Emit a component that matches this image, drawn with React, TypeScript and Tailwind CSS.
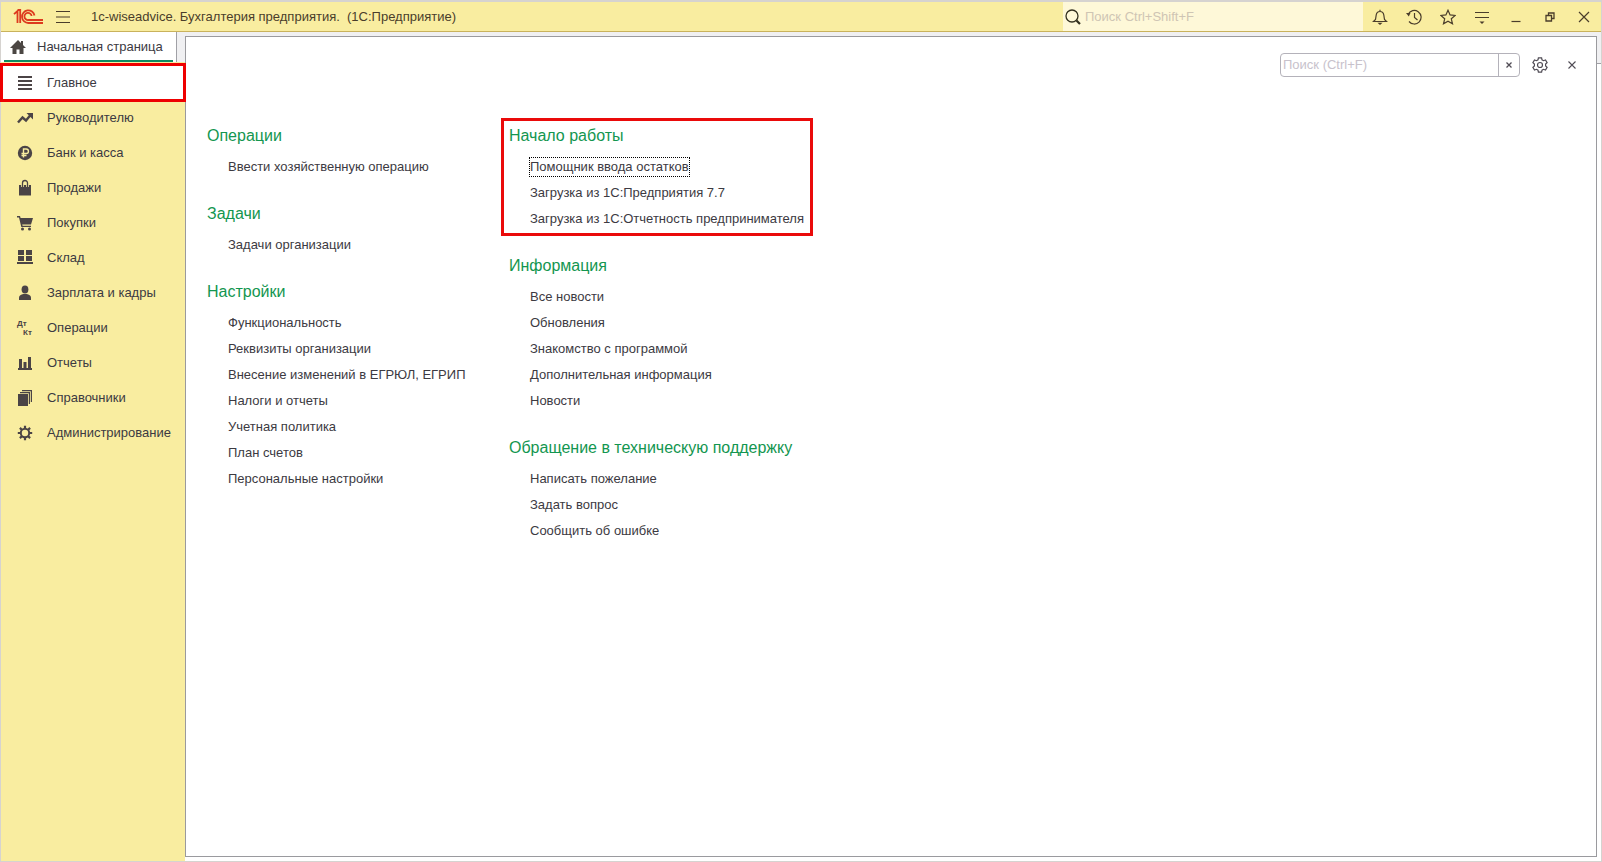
import type { ReactNode } from "react";

type Section = { label: string; icon: ReactNode };
type Group = { title: string; items: string[]; marked?: boolean };

const sections: Section[] = [
  { label: "Главное", icon: <path d="M1 1h14v2H1zM1 5h14v2H1zM1 9h14v2H1zM1 13h14v2H1z" /> },
  {
    label: "Руководителю",
    icon: (
      <>
        <path d="M1 12.5 5.5 7.5l3.5 3 4.5-5.500" fill="none" stroke="currentColor" strokeWidth="2.4" />
        <path d="M9.5 3H16v6.5z" />
      </>
    ),
  },
  {
    label: "Банк и касса",
    icon: (
      <>
        <circle cx="8" cy="8" r="7.2" />
        <path d="M6.500 12.500V4h2.700a2.200 2.200 0 0 1 0 4.500H4.500M4.500 10.500h5" fill="none" stroke="#f9eda0" strokeWidth="1.4" />
      </>
    ),
  },
  {
    label: "Продажи",
    icon: (
      <>
        <path d="M2 5h12v10.500H2z" />
        <path d="M5.500 7V3.500a2.500 2.500 0 0 1 5 0V7" fill="none" stroke="#f9eda0" strokeWidth="2.8" />
        <path d="M5.500 7V3a2.500 2.500 0 0 1 5 0V7" fill="none" stroke="currentColor" strokeWidth="1.3" />
      </>
    ),
  },
  {
    label: "Покупки",
    icon: (
      <>
        <path d="M0 1h3l.6 2H16l-2 6.500H5.200l.4 1.300H14V12H4.300L2 2.500H0z" />
        <circle cx="5.5" cy="14" r="1.5" />
        <circle cx="12.5" cy="14" r="1.5" />
      </>
    ),
  },
  {
    label: "Склад",
    icon: <path d="M1 0h6v5H1zM9 0h6v5H9zM1 6h6v5H1zM9 6h6v5H9zM0 12h16v2H0z" />,
  },
  {
    label: "Зарплата и кадры",
    icon: (
      <>
        <ellipse cx="8" cy="4.5" rx="3.4" ry="4" />
        <path d="M2 15v-2.500c0-2 2-3 4.300-3.500h3.400c2.300.5 4.300 1.500 4.300 3.500V15z" />
      </>
    ),
  },
  {
    label: "Операции",
    icon: (
      <g fontFamily="Liberation Sans, sans-serif" fontWeight="700" fontSize="8">
        <text x="0" y="6">Дт</text>
        <text x="6" y="15">Кт</text>
      </g>
    ),
  },
  { label: "Отчеты", icon: <path d="M2 4h3v9H2zM6.500 7h3v6h-3zM11 2h3v11h-3zM1 13h14v2H1z" /> },
  {
    label: "Справочники",
    icon: <path d="M1 4h10v12H1zM3 2h10v12h-1.200V3.200H3zM5 0h10v12h-1.200V1.200H5z" />,
  },
  {
    label: "Администрирование",
    icon: (
      <>
        <circle cx="8" cy="8" r="4.2" fill="none" stroke="currentColor" strokeWidth="2" />
        <path
          d="M8 .8v3M8 12.200v3M.8 8h3M12.200 8h3M2.900 2.900 5 5M11 11l2.100 2.100M2.900 13.100 5 11M11 5l2.100-2.100"
          stroke="currentColor"
          strokeWidth="2.2"
        />
      </>
    ),
  },
];

const leftGroups: Group[] = [
  { title: "Операции", items: ["Ввести хозяйственную операцию"] },
  { title: "Задачи", items: ["Задачи организации"] },
  {
    title: "Настройки",
    items: [
      "Функциональность",
      "Реквизиты организации",
      "Внесение изменений в ЕГРЮЛ, ЕГРИП",
      "Налоги и отчеты",
      "Учетная политика",
      "План счетов",
      "Персональные настройки",
    ],
  },
];

const rightGroups: Group[] = [
  {
    title: "Начало работы",
    marked: true,
    items: [
      "Помощник ввода остатков",
      "Загрузка из 1С:Предприятия 7.7",
      "Загрузка из 1С:Отчетность предпринимателя",
    ],
  },
  {
    title: "Информация",
    items: ["Все новости", "Обновления", "Знакомство с программой", "Дополнительная информация", "Новости"],
  },
  {
    title: "Обращение в техническую поддержку",
    items: ["Написать пожелание", "Задать вопрос", "Сообщить об ошибке"],
  },
];

const windowButtons: Section[] = [
  {
    label: "Уведомления",
    icon: (
      <>
        <path d="M1.500 12.500h13L12.500 10.500 11.800 6C11.500 4 10 2.500 8 2.500S4.500 4 4.200 6l-.7 4.500zM8 2.500V.8" />
        <path d="M5.500 13.800h5L8 16z" fill="currentColor" stroke="none" />
      </>
    ),
  },
  {
    label: "История",
    icon: (
      <>
        <path d="M2.200 5.200A6.800 6.800 0 1 1 3 12.500M8.500 4v4.500l3 2.500" />
        <path d="M0 4h4.500L2.800 7.500z" fill="currentColor" stroke="none" />
      </>
    ),
  },
  {
    label: "Избранное",
    icon: <path d="m8 1.200 2.100 4.700 5.100.5-3.900 3.400 1.200 5L8 12.200l-4.500 2.600 1.200-5L.8 6.400l5.100-.5z" />,
  },
  {
    label: "Настройки окна",
    icon: (
      <>
        <path d="M1 3.500h14M1 8.500h14" />
        <path d="M5.500 12.500h5L8 15z" fill="currentColor" stroke="none" />
      </>
    ),
  },
  { label: "Свернуть", icon: <path d="M3.500 12.500h9" /> },
  { label: "Развернуть", icon: <path d="M4 6.500h5.500V12H4zM6.500 6.500V4H12v5.500H9.500" strokeWidth="1.3" /> },
  { label: "Закрыть", icon: <path d="m3 3 10 10M13 3 3 13" /> },
];

function CommandGroup({ title, items, marked }: Group) {
  return (
    <section className="relative w-fit">
      <h2 className="mb-1.5 text-base leading-6 text-[#139650]">{title}</h2>
      <ul className="pl-5">
        {items.map((item, index) => (
          <li key={item} className="flex h-[26px] items-center">
            <a
              href="#"
              className={
                marked && index === 0
                  ? "border border-dotted border-black leading-[18px] whitespace-nowrap"
                  : "border border-transparent leading-[18px] whitespace-nowrap hover:underline"
              }
            >
              {item}
            </a>
          </li>
        ))}
      </ul>
      {marked && <div className="pointer-events-none absolute -top-1.5 -right-2 -bottom-1 -left-2 border-3 border-[#ea0a0a]" />}
    </section>
  );
}

export default function App() {
  return (
    <div className="flex min-h-screen flex-col border border-t-2 border-[#d6d3d0] bg-[#f0f0f2] font-['Liberation_Sans',Arial,sans-serif] text-[13px] text-[#3c3a42]">
      <header className="flex h-[30px] items-center border-b border-[#c9b25c] bg-[#f9eda0] text-[#4a3d2b]">
        <svg width="30" height="16" viewBox="0 0 30 16" className="ml-3 shrink-0" fill="none" stroke="#dd3a1e" strokeWidth="1.8" aria-label="1С">
          <path d="M1 5.200 4.500 2v12M7.200 14V1H4.500" />
          <path d="M21.500 6.500A6.300 6.300 0 1 0 15.500 14H30" />
          <path d="M18.600 7A3.600 3.600 0 1 0 15.500 11H30" />
        </svg>
        <button type="button" aria-label="Меню" className="ml-3 shrink-0">
          <svg width="16" height="16" viewBox="0 0 16 16" fill="none" stroke="currentColor" strokeWidth="1.2">
            <path d="M1 2.500h14M1 8h14M1 13.500h14" />
          </svg>
        </button>
        <h1 className="ml-5 whitespace-pre">1c-wiseadvice. Бухгалтерия предприятия.  (1С:Предприятие)</h1>
        <label className="ml-auto flex h-full w-[300px] items-center bg-[#fef8d8] pl-0.5">
          <svg width="16" height="16" viewBox="0 0 16 16" fill="none" stroke="#33301f" strokeWidth="1.3" className="shrink-0">
            <circle cx="7" cy="7" r="6" />
            <path d="m11.500 11.500 3.500 3.500" strokeWidth="2.2" />
          </svg>
          <input
            type="text"
            aria-label="Поиск"
            placeholder="Поиск Ctrl+Shift+F"
            className="ml-1 w-full bg-transparent outline-none placeholder:text-[#cfc5b4]"
          />
        </label>
        <nav className="flex">
          {windowButtons.map((button) => (
            <button key={button.label} type="button" aria-label={button.label} className="flex w-[34px] justify-center">
              <svg width="16" height="16" viewBox="0 0 16 16" fill="none" stroke="currentColor" strokeWidth="1.2">
                {button.icon}
              </svg>
            </button>
          ))}
        </nav>
      </header>

      <div className="flex flex-1">
        <aside className="flex w-[184px] shrink-0 flex-col">
          <div className="w-[176px] border-r border-[#a0a0a6] bg-white px-[3px]">
            <a href="#" className="flex h-[30px] items-center gap-[11px] border-b-2 border-[#0f8a63] pt-0.5 pl-1.5">
              <svg width="16" height="16" viewBox="0 0 16 16" fill="#4b4643">
                <path d="M8 1 0 9h2.500v6H6.500v-4.500h3V15h4V9H16L13 6V2h-2v2z" />
              </svg>
              Начальная страница
            </a>
          </div>
          <nav className="flex flex-1 flex-col bg-[#f9eda0] pt-[3px]">
            {sections.map((section, index) => (
              <a
                key={section.label}
                href="#"
                className={
                  index === 0
                    ? "relative flex h-[35px] items-center gap-3.5 bg-white pl-4"
                    : "flex h-[35px] items-center gap-3.5 pl-4"
                }
              >
                <svg width="16" height="16" viewBox="0 0 16 16" fill="currentColor" className="shrink-0 overflow-visible text-[#4b4446]">
                  {section.icon}
                </svg>
                {section.label}
                {index === 0 && <span className="absolute -inset-x-px -inset-y-0.5 z-10 border-3 border-[#ee0000]" />}
              </a>
            ))}
          </nav>
        </aside>

        <div className="flex flex-1 bg-[linear-gradient(#f0f0f2_31px,#a0a0a6_31px,#a0a0a6_32px,#ffffff_32px)] pt-1 pr-1 pb-1">
          <main className="flex-1 border border-[#9a9a9e] bg-white">
            <div className="flex h-14 items-center justify-end gap-3 pr-3">
              <div className="flex h-6 w-60 items-stretch rounded-sm border border-[#b4b2ba]">
                <input
                  type="text"
                  aria-label="Поиск по командам"
                  placeholder="Поиск (Ctrl+F)"
                  className="min-w-0 flex-1 px-0.5 outline-none placeholder:text-[#c8c2cc]"
                />
                <button type="button" aria-label="Очистить" className="flex w-[21px] items-center justify-center border-l border-[#b4b2ba]">
                  <svg width="6" height="6" viewBox="0 0 6 6" fill="none" stroke="#504c55" strokeWidth="1.3">
                    <path d="m.5.5 5 5M5.500.5l-5 5" />
                  </svg>
                </button>
              </div>
              <button type="button" aria-label="Настройка">
                <svg width="16" height="16" viewBox="0 0 16 16" fill="none" stroke="#504c55" strokeWidth="1.2">
                  <path d="M6.400.8h3.200l.4 2 1.500.9 2-.7 1.600 2.700L13.600 7v2l1.500 1.300-1.600 2.700-2-.7-1.500.9-.4 2H6.400l-.4-2-1.500-.9-2 .7L.9 10.300 2.400 9V7L.9 5.700 2.500 3l2 .7L6 2.800z" />
                  <circle cx="8" cy="8" r="2.5" />
                </svg>
              </button>
              <button type="button" aria-label="Закрыть раздел" className="flex w-6 justify-center">
                <svg width="8" height="8" viewBox="0 0 8 8" fill="none" stroke="#504c55" strokeWidth="1.1">
                  <path d="m.5.5 7 7M7.500.5l-7 7" />
                </svg>
              </button>
            </div>
            <div className="flex pt-[31px] pl-[21px]">
              <div className="flex w-[302px] flex-col gap-[22px]">
                {leftGroups.map((group) => (
                  <CommandGroup key={group.title} {...group} />
                ))}
              </div>
              <div className="flex flex-col gap-[22px]">
                {rightGroups.map((group) => (
                  <CommandGroup key={group.title} {...group} />
                ))}
              </div>
            </div>
          </main>
        </div>
      </div>
    </div>
  );
}
